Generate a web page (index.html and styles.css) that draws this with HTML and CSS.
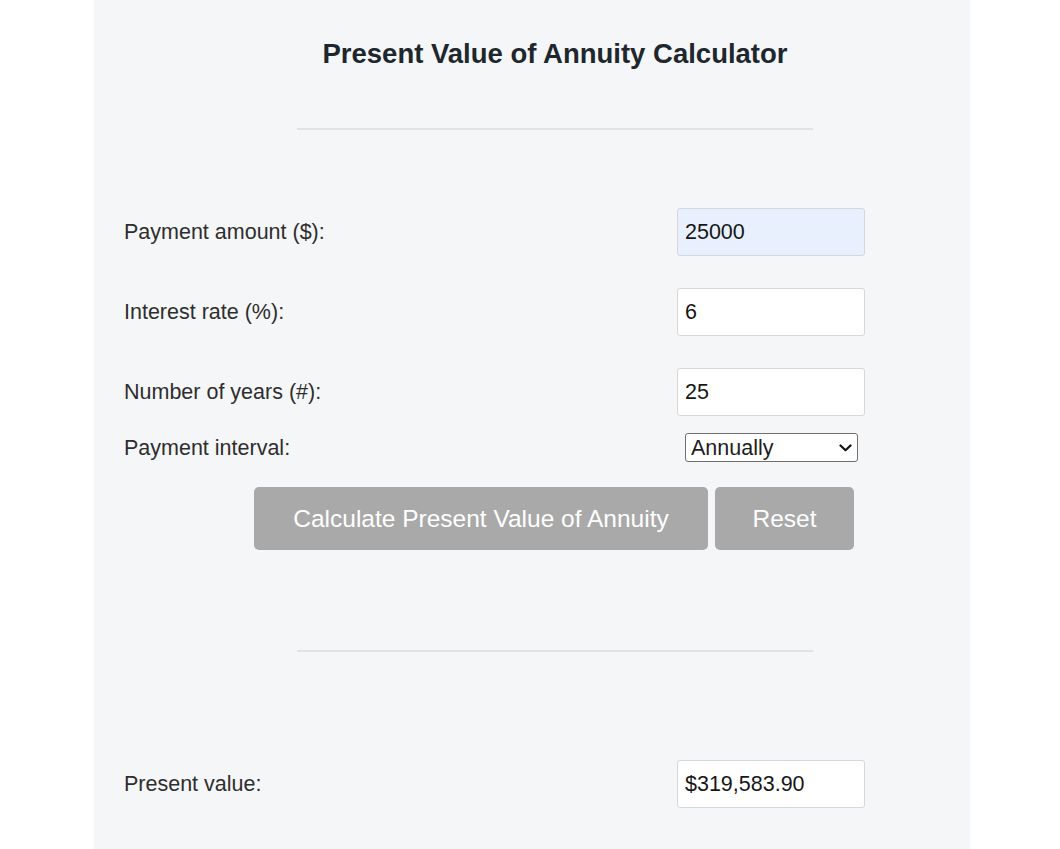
FILE: index.html
```html
<!DOCTYPE html>
<html lang="en">
<head>
    <meta charset="UTF-8">
    <meta name="viewport" content="width=device-width, initial-scale=1.0">
    <title>Present Value of Annuity Calculator</title>
    <link rel="stylesheet" href="styles.css">
</head>
<body>
    <div class="panel">
        <div class="calc">
            <h1>Present Value of Annuity Calculator</h1>
            <hr>

            <div class="form">
                <div class="row">
                    <label for="payment">Payment amount ($):</label>
                    <input type="text" id="payment" class="autofill" value="25000">
                </div>
                <div class="row">
                    <label for="rate">Interest rate (%):</label>
                    <input type="text" id="rate" value="6">
                </div>
                <div class="row">
                    <label for="years">Number of years (#):</label>
                    <input type="text" id="years" value="25">
                </div>
                <div class="row row-select">
                    <label for="interval">Payment interval:</label>
                    <div class="select-wrap">
                        <select id="interval">
                            <option>Annually</option>
                            <option>Semi-annually</option>
                            <option>Quarterly</option>
                            <option>Monthly</option>
                        </select>
                        <svg class="chevron" width="13" height="8" viewBox="0 0 13 8">
                            <path d="M1.5 1.5 L6.5 6.2 L11.5 1.5" fill="none" stroke="#111" stroke-width="2.2" stroke-linecap="round" stroke-linejoin="round"/>
                        </svg>
                    </div>
                </div>
                <div class="buttons">
                    <button class="btn-calc">Calculate Present Value of Annuity</button>
                    <button class="btn-reset">Reset</button>
                </div>
            </div>

            <hr class="hr-result">

            <div class="row result">
                <label for="pv">Present value:</label>
                <input type="text" id="pv" value="$319,583.90" readonly>
            </div>
        </div>
    </div>
</body>
</html>
```

FILE: styles.css
```css
body {
    margin: 0;
    background: #fff;
    font-family: "Liberation Sans", Arial, sans-serif;
    color: #2e2e2e;
}
.panel {
    margin-left: 94px;
    width: 876px;
    min-height: 849px;
    background: #f5f6f8;
    padding: 39px 0 0 30px;
    box-sizing: border-box;
}
.calc {
    width: 862px;
}
h1 {
    margin: 0;
    text-align: center;
    font-size: 27.5px;
    line-height: 30px;
    font-weight: bold;
    color: #1e272d;
}
hr {
    width: 516px;
    margin: 59px auto 0;
    border: none;
    border-top: 2px solid #e2e3e5;
}
.form {
    margin-top: 78px;
    display: flex;
    flex-direction: column;
    gap: 32px;
}
.row {
    display: grid;
    grid-template-columns: 553px 188px;
    align-items: center;
}
.row label {
    font-size: 21.5px;
    padding-top: 1px;
}
.row input {
    height: 48px;
    box-sizing: border-box;
    width: 188px;
    padding: 0 7px;
    border: 1px solid #d6d7d9;
    border-radius: 3px;
    background: #fff;
    font-family: inherit;
    font-size: 21.5px;
    color: #161616;
    outline: none;
}
.row input.autofill {
    background: #e8f0fe;
}
.row-select {
    margin-top: -15px;
}
.select-wrap {
    position: relative;
    margin-left: 8px;
    width: 173px;
    height: 29px;
}
.select-wrap select {
    appearance: none;
    width: 100%;
    height: 100%;
    padding: 0 5px;
    border: 1px solid #6f6f6f;
    border-radius: 3px;
    background: #fff;
    font-family: inherit;
    font-size: 21.5px;
    color: #1d1d1d;
}
.chevron {
    position: absolute;
    right: 6px;
    top: 11px;
    pointer-events: none;
}
.buttons {
    margin-top: -7px;
    display: flex;
    justify-content: center;
    gap: 7px;
    padding-right: 2px;
}
.buttons button {
    height: 63px;
    border: none;
    border-radius: 5px;
    background: #a9a9a9;
    color: #fff;
    font-family: inherit;
    font-size: 24.5px;
    cursor: pointer;
}
.btn-calc {
    width: 454px;
}
.btn-reset {
    width: 139px;
}
.hr-result {
    margin-top: 100px;
}
.result {
    margin-top: 108px;
}
```
